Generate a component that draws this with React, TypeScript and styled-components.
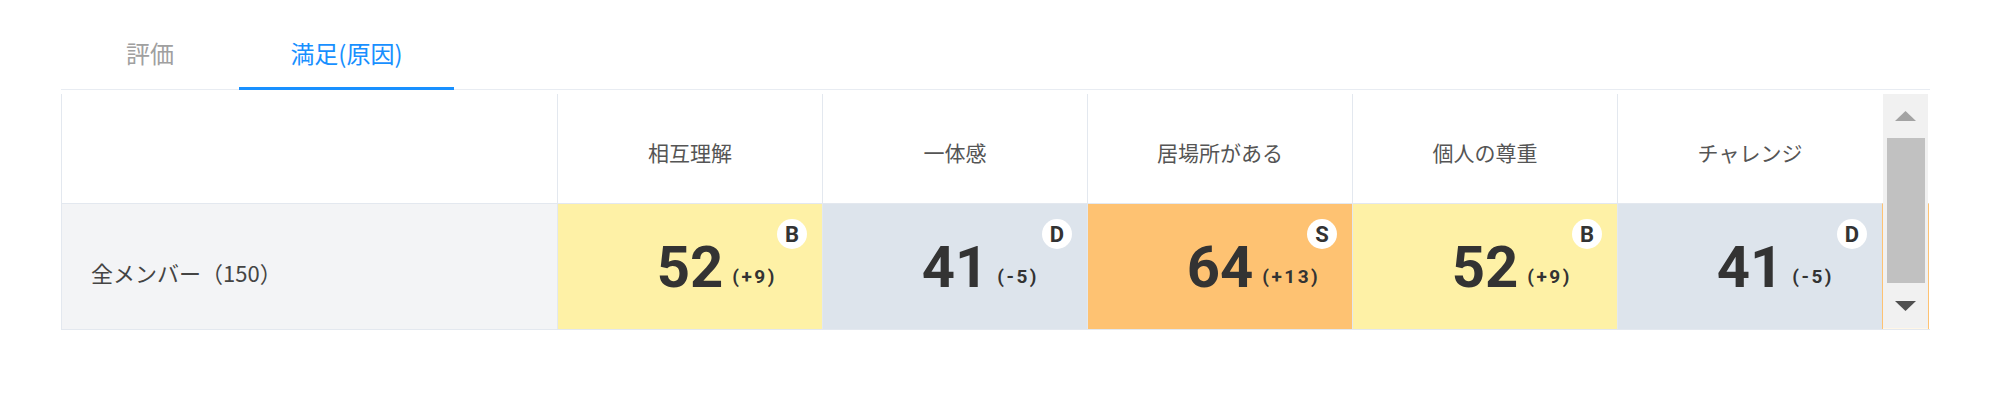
import React from "react";
import styled, { createGlobalStyle, css } from "styled-components";

type Level = "S" | "A" | "B" | "C" | "D";

interface Score {
  title: string;
  value: number;
  diff: string;
  level: Level;
}

const levelColors: Record<Level, string> = {
  S: "#fec272",
  A: "#fedc8c",
  B: "#fef1a6",
  C: "#eceff3",
  D: "#dde4ec",
};

const scores: Score[] = [
  { title: "相互理解", value: 52, diff: "+9", level: "B" },
  { title: "一体感", value: 41, diff: "-5", level: "D" },
  { title: "居場所がある", value: 64, diff: "+13", level: "S" },
  { title: "個人の尊重", value: 52, diff: "+9", level: "B" },
  { title: "チャレンジ", value: 41, diff: "-5", level: "D" },
];

export default function App() {
  return (
    <>
      <GlobalStyle />
      <Page>
        <TabBar>
          <Tab $width={178}>評価</Tab>
          <Tab $width={215} $active>
            満足(原因)
          </Tab>
        </TabBar>

        <Table>
          <HeadCell />
          {scores.map((s) => (
            <HeadCell key={s.title}>{s.title}</HeadCell>
          ))}

          <ScrollColumn>
            <ScrollHead />
            <ScrollPeek />
            <ScrollTrack>
              <ArrowButton>
                <svg width="21" height="10" viewBox="0 0 21 10">
                  <polygon points="10.5,0 21,10 0,10" fill="#a3a3a3" />
                </svg>
              </ArrowButton>
              <Thumb />
              <ArrowButton $grow>
                <svg width="21" height="10" viewBox="0 0 21 10">
                  <polygon points="0,0 21,0 10.5,10" fill="#505050" />
                </svg>
              </ArrowButton>
            </ScrollTrack>
          </ScrollColumn>

          <LabelCell>全メンバー（150）</LabelCell>
          {scores.map((s, i) => (
            <ScoreCell key={i} $level={s.level}>
              <Badge>{s.level}</Badge>
              <Value>
                {s.value}
                <Diff>({s.diff})</Diff>
              </Value>
            </ScoreCell>
          ))}
        </Table>
      </Page>
    </>
  );
}

const GlobalStyle = createGlobalStyle`
  html, body {
    margin: 0;
    padding: 0;
    background: #ffffff;
  }
  body {
    font-family: "Noto Sans CJK JP", "Noto Sans", sans-serif;
  }
`;

const Page = styled.div`
  width: 1869px;
  margin-left: 61px;
`;

const TabBar = styled.div`
  display: flex;
  height: 89px;
  border-bottom: 1px solid #e8ecf2;
`;

const Tab = styled.div<{ $active?: boolean; $width: number }>`
  position: relative;
  width: ${(p) => p.$width}px;
  display: flex;
  justify-content: center;
  align-items: flex-end;
  padding-bottom: 19px;
  box-sizing: border-box;
  font-size: 24px;
  line-height: 34px;
  color: ${(p) => (p.$active ? "#1890ff" : "#a0a0a0")};

  ${(p) =>
    p.$active &&
    css`
      &::after {
        content: "";
        position: absolute;
        left: 0;
        right: 0;
        bottom: -1px;
        height: 3px;
        background: #1890ff;
      }
    `}
`;

const Table = styled.div`
  margin-top: 4px;
  display: grid;
  grid-template-columns: 496px repeat(5, 265px) 47px;
  grid-template-rows: 109px 126px;
  border-bottom: 1px solid #e3e8ef;
`;

const HeadCell = styled.div`
  display: flex;
  align-items: center;
  justify-content: center;
  padding-top: 6px;
  box-sizing: border-box;
  border-left: 1px solid #e3e8ef;
  background: #ffffff;
  font-size: 21px;
  color: #555555;
`;

const LabelCell = styled.div`
  display: flex;
  align-items: center;
  padding: 11px 0 0 29px;
  box-sizing: border-box;
  border-left: 1px solid #e3e8ef;
  border-top: 1px solid #e3e8ef;
  background: #f3f4f6;
  font-size: 22px;
  color: #444444;
`;

const ScoreCell = styled.div<{ $level: Level }>`
  position: relative;
  display: flex;
  align-items: center;
  justify-content: center;
  border-left: 1px solid #e3e8ef;
  border-top: 1px solid #e3e8ef;
  background: ${(p) => levelColors[p.$level]};
`;

const Value = styled.div`
  position: relative;
  font-family: Roboto, "Liberation Sans", sans-serif;
  font-weight: 700;
  font-size: 58px;
  line-height: 58px;
  color: #333333;
`;

const Diff = styled.span`
  position: absolute;
  left: calc(100% + 9px);
  bottom: 10px;
  font-size: 19px;
  line-height: 19px;
  letter-spacing: 2.5px;
  white-space: nowrap;
  color: #333333;
`;

const Badge = styled.div`
  position: absolute;
  top: 15px;
  right: 15px;
  width: 30px;
  height: 30px;
  border-radius: 50%;
  background: #ffffff;
  display: flex;
  align-items: center;
  justify-content: center;
  font-family: Roboto, "Liberation Sans", sans-serif;
  font-weight: 700;
  font-size: 22px;
  color: #333333;
`;

const ScrollColumn = styled.div`
  position: relative;
  grid-column: 7;
  grid-row: 1 / 3;
  display: grid;
  grid-template-rows: 109px 126px;
`;

const ScrollHead = styled.div`
  background: #ffffff;
`;

const ScrollPeek = styled.div`
  border-top: 1px solid #e3e8ef;
  border-left: 1px solid #fec272;
  border-right: 1px solid #fec272;
  background: #fff6e6;
`;

const ScrollTrack = styled.div`
  position: absolute;
  top: 0;
  bottom: 1px;
  left: 1px;
  right: 1px;
  display: flex;
  flex-direction: column;
  background: #f1f1f1;
`;

const ArrowButton = styled.div<{ $grow?: boolean }>`
  height: 44px;
  flex: ${(p) => (p.$grow ? "1" : "none")};
  display: flex;
  align-items: center;
  justify-content: center;
`;

const Thumb = styled.div`
  height: 145px;
  margin: 0 3px 0 4px;
  background: #c1c1c1;
`;
